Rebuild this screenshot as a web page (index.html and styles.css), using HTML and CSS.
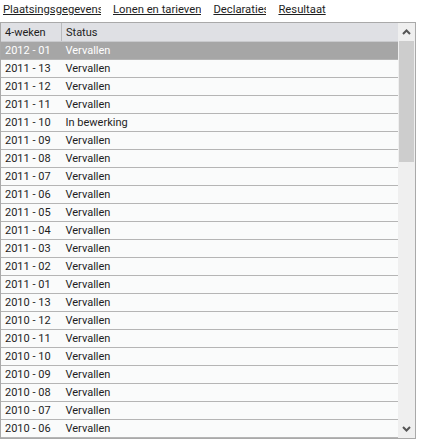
FILE: index.html
```html
<!DOCTYPE html>
<html>
<head>
<meta charset="utf-8">
<link rel="stylesheet" href="styles.css">
</head>
<body>
<nav class="tabs">
  <a class="tab tab-1" href="#">Plaatsingsgegevens</a>
  <a class="tab tab-2" href="#">Lonen en tarieven</a>
  <a class="tab tab-3" href="#">Declaraties</a>
  <a class="tab tab-4" href="#">Resultaat</a>
</nav>
<div class="grid-box">
  <div class="grid-body">
    <table class="grid">
      <thead>
        <tr><th class="c1">4-weken</th><th class="c2">Status</th></tr>
      </thead>
      <tbody>
        <tr class="sel"><td>2012 - 01</td><td>Vervallen</td></tr>
        <tr><td>2011 - 13</td><td>Vervallen</td></tr>
        <tr><td>2011 - 12</td><td>Vervallen</td></tr>
        <tr><td>2011 - 11</td><td>Vervallen</td></tr>
        <tr><td>2011 - 10</td><td>In bewerking</td></tr>
        <tr><td>2011 - 09</td><td>Vervallen</td></tr>
        <tr><td>2011 - 08</td><td>Vervallen</td></tr>
        <tr><td>2011 - 07</td><td>Vervallen</td></tr>
        <tr><td>2011 - 06</td><td>Vervallen</td></tr>
        <tr><td>2011 - 05</td><td>Vervallen</td></tr>
        <tr><td>2011 - 04</td><td>Vervallen</td></tr>
        <tr><td>2011 - 03</td><td>Vervallen</td></tr>
        <tr><td>2011 - 02</td><td>Vervallen</td></tr>
        <tr><td>2011 - 01</td><td>Vervallen</td></tr>
        <tr><td>2010 - 13</td><td>Vervallen</td></tr>
        <tr><td>2010 - 12</td><td>Vervallen</td></tr>
        <tr><td>2010 - 11</td><td>Vervallen</td></tr>
        <tr><td>2010 - 10</td><td>Vervallen</td></tr>
        <tr><td>2010 - 09</td><td>Vervallen</td></tr>
        <tr><td>2010 - 08</td><td>Vervallen</td></tr>
        <tr><td>2010 - 07</td><td>Vervallen</td></tr>
        <tr><td>2010 - 06</td><td>Vervallen</td></tr>
      </tbody>
    </table>
  </div>
  <div class="scrollbar">
    <div class="sb-btn">
      <svg width="9" height="6" viewBox="0 0 9 6"><path d="M1 5 L4.5 1.5 L8 5" fill="none" stroke="#555" stroke-width="2"/></svg>
    </div>
    <div class="sb-track">
      <div class="sb-thumb"></div>
    </div>
    <div class="sb-btn">
      <svg width="9" height="6" viewBox="0 0 9 6"><path d="M1 1 L4.5 4.5 L8 1" fill="none" stroke="#555" stroke-width="2"/></svg>
    </div>
  </div>
</div>
</body>
</html>
```

FILE: styles.css
```css
html, body {
  margin: 0;
  padding: 0;
  background: #ffffff;
}
body {
  font-family: Roboto, "Liberation Sans", sans-serif;
  font-size: 11px;
  color: #1e1e1e;
  overflow: hidden;
}
.tabs {
  display: flex;
  gap: 12px;
  height: 22px;
  padding-left: 3px;
  align-items: flex-start;
  padding-top: 3px;
  box-sizing: border-box;
}
.tab {
  color: #1e1e1e;
  font-size: 11.25px;
  text-decoration: underline;
  white-space: nowrap;
  overflow: hidden;
  line-height: 14px;
  height: 16px;
}
.tab-1 { width: 98px; }
.tab-3 { width: 53px; }
.grid-box {
  display: flex;
  width: 416px;
  height: 417px;
  border: 1px solid #a9a9a9;
  box-sizing: border-box;
  background: #fafbfb;
}
.grid-body {
  flex: 1;
  overflow: hidden;
}
.grid {
  width: 100%;
  border-collapse: collapse;
  table-layout: fixed;
}
.grid th, .grid td {
  text-align: left;
  font-weight: normal;
  white-space: nowrap;
  padding: 0 0 0 4px;
}
.grid th {
  background: #dfe0e4;
  height: 18px;
  border-bottom: 1px solid #c9cacd;
}
.grid th.c1 {
  width: 56px;
  border-right: 1px solid #b9babd;
}
.grid td {
  height: 17px;
  border-bottom: 1px solid #b5b5b5;
}
.grid tr.sel td {
  background: #a6a6a6;
  color: #ffffff;
}
.scrollbar {
  width: 17px;
  display: flex;
  flex-direction: column;
  background: #efefef;
}
.sb-btn {
  height: 18px;
  display: flex;
  align-items: center;
  justify-content: center;
}
.sb-track {
  flex: 1;
  padding: 0 1px;
}
.sb-thumb {
  height: 121px;
  background: #cdcdcd;
}
```
